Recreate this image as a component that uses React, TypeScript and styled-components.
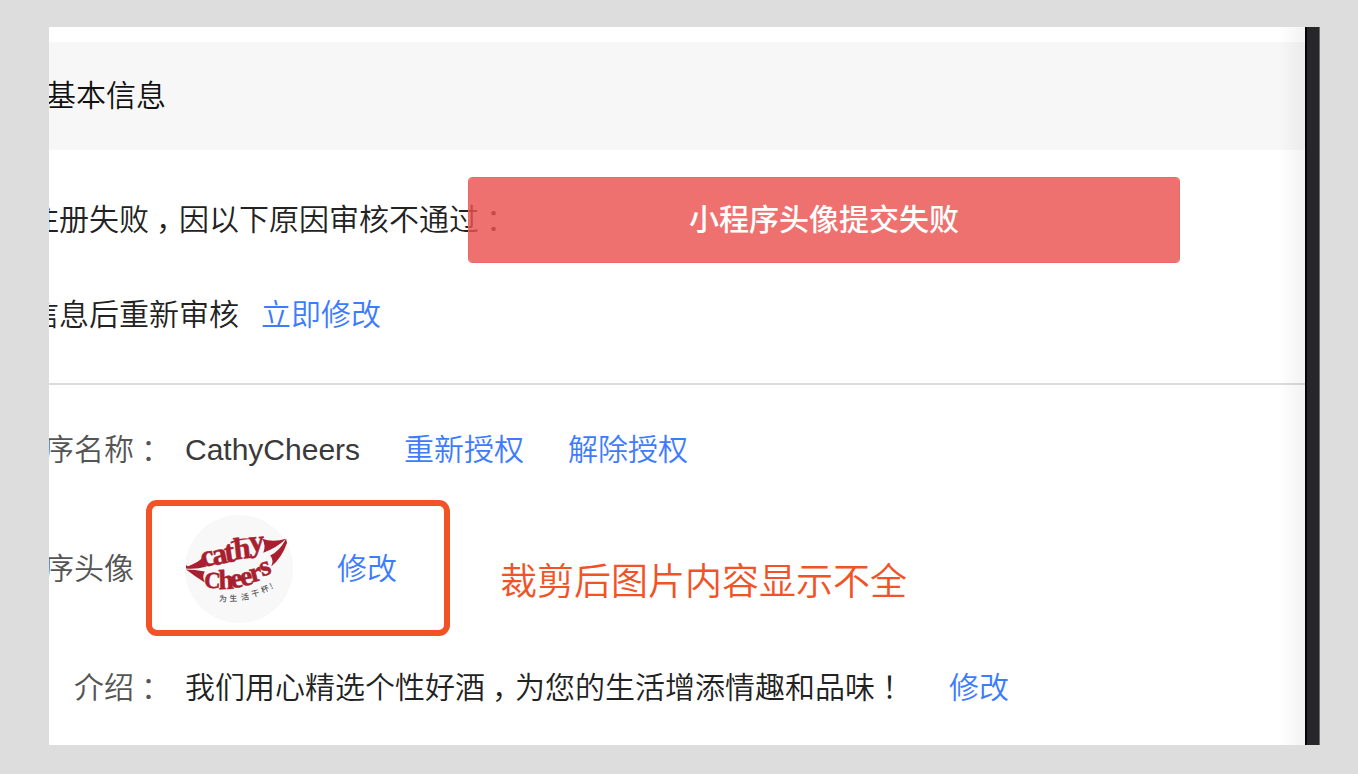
import React from "react";
import styled, { createGlobalStyle } from "styled-components";

const GlobalStyle = createGlobalStyle`
  body {
    margin: 0;
    background: #dddddd;
    color: #222222;
    font: 350 30px/40px "Liberation Sans", "Noto Sans CJK SC", sans-serif;
  }
  *, *::before, *::after { box-sizing: border-box; }
`;

const Page = styled.main`
  display: flex;
  padding: 27px 38px 28px 49px;
`;

const Panel = styled.section`
  position: relative;
  flex: 1;
  min-width: 0;
  overflow: hidden;
  padding-top: 15px;
  background: #ffffff;
  white-space: nowrap;

  &::after {
    content: "";
    position: absolute;
    inset: 0 0 0 auto;
    width: 26px;
    background: linear-gradient(to right, rgba(0, 0, 0, 0), rgba(0, 0, 0, 0.05));
    pointer-events: none;
  }
`;

const WindowEdge = styled.div`
  width: 15px;
  background: #272729;
  border-left: 2px solid #050505;
  border-right: 1px solid #6b6b6b;
`;

const SectionHeader = styled.header`
  padding: 34px 0;
  background: #f7f7f7;
`;

const Title = styled.h1`
  margin: 0 0 0 -3px;
  font: inherit;
  color: #111111;
`;

const Notice = styled.div`
  display: flex;
  flex-direction: column;
  gap: 55px;
  padding: 50px 0 48px;
  border-bottom: 2px solid #dcdcdc;
`;

const NoticeLine = styled.p`
  display: flex;
  gap: 22px;
  margin: 0 0 0 -20px;
`;

const Link = styled.a`
  color: #3d7bff;
  text-decoration: none;
`;

const Mark = styled.span`
  padding-left: 7px;
  margin-right: -7px;
`;

const Toast = styled.div`
  position: absolute;
  top: 150px;
  left: 419px;
  right: 125px;
  padding: 22px 0;
  border: 1px solid #ec6a66;
  border-radius: 4px;
  background: rgba(234, 82, 79, 0.82);
  background-clip: padding-box;
  color: #ffffff;
  font-weight: 500;
  text-align: center;
`;

const Details = styled.dl`
  display: flex;
  flex-direction: column;
  gap: 45px;
  margin: 0;
  padding: 45px 0 37px;
`;

const Row = styled.div`
  position: relative;
  display: flex;
  align-items: center;
`;

const Label = styled.dt`
  display: flex;
  justify-content: flex-end;
  width: 115px;
  color: #555555;
`;

const Value = styled.dd`
  display: flex;
  align-items: center;
  gap: 44px;
  margin: 0 0 0 21px;
`;

const AccountName = styled.span`
  color: #3a3a3a;
`;

const Avatar = styled.svg`
  display: block;
  width: 108px;
  height: 108px;
`;

const Highlight = styled.div`
  position: absolute;
  top: -15px;
  left: 97px;
  width: 304px;
  height: 136px;
  border: 6px solid #f15326;
  border-radius: 11px;
`;

const Annotation = styled.p`
  position: absolute;
  top: 48px;
  left: 451px;
  margin: 0;
  color: #f15326;
  font-size: 37px;
`;

function Logo() {
  return (
    <Avatar viewBox="0 0 109 109" role="img" aria-label="Cathy Cheers">
      <circle cx="54.5" cy="54.5" r="54.5" fill="#f8f8f8" />
      <g fill="#a91f30">
        <path d="M1 50Q2 53 5 51Q13 48 18 43Q17 49 22 52Q11 55 1 54Z" />
        <path d="M1 55Q10 55 20 57Q17 62 20 68Q10 62 1 55Z" />
        <path d="M78 24Q89 28 102 24Q93 33 79 38Q82 31 78 24Z" />
        <path d="M102 24L103 28Q98 43 87 52Q90 46 86 41Q95 37 102 24Z" />
        <path d="M46 27Q58 21 70 25Q60 23 46 29Z" />
      </g>
      <g
        fill="#a91f30"
        stroke="#a91f30"
        strokeWidth="0.6"
        fontFamily="Liberation Serif, serif"
        fontWeight="700"
      >
        <text fontSize="31" x="18 29 41 50 65" y="53 51 48 45 37" rotate="-14 -12 -8 -6 -4">cathy</text>
        <text fontSize="23" x="19" y="73" rotate="4">C</text>
        <text fontSize="28" x="34 47 57 67 78" y="75 74 72 68 62" rotate="-2 -8 -10 -14 -18">heers</text>
      </g>
      <text
        fill="#555555"
        fontFamily="Noto Sans CJK SC"
        fontSize="8"
        fontWeight="500"
        x="34 45 57 68 78 87"
        y="87 87 86 83 79 75"
        rotate="4 -2 -8 -16 -22 -26"
      >
        为生活干杯!
      </text>
    </Avatar>
  );
}

export default function App() {
  return (
    <>
      <GlobalStyle />
      <Page>
        <Panel>
          <SectionHeader>
            <Title>基本信息</Title>
          </SectionHeader>
          <Notice>
            <NoticeLine>
              <span>
                注册失败<Mark>，</Mark>因以下原因审核不通过<Mark>：</Mark>
              </span>
            </NoticeLine>
            <NoticeLine>
              <span>信息后重新审核</span>
              <Link href="#edit">立即修改</Link>
            </NoticeLine>
          </Notice>
          <Details>
            <Row>
              <Label>序名称<Mark>：</Mark></Label>
              <Value>
                <AccountName>CathyCheers</AccountName>
                <Link href="#reauthorize">重新授权</Link>
                <Link href="#revoke">解除授权</Link>
              </Value>
            </Row>
            <Row>
              <Label>序头像<Mark>：</Mark></Label>
              <Value>
                <Logo />
                <Link href="#avatar">修改</Link>
              </Value>
              <Highlight />
              <Annotation>裁剪后图片内容显示不全</Annotation>
            </Row>
            <Row>
              <Label>介绍<Mark>：</Mark></Label>
              <Value>
                <span>
                  我们用心精选个性好酒<Mark>，</Mark>为您的生活增添情趣和品味<Mark>！</Mark>
                </span>
                <Link href="#intro">修改</Link>
              </Value>
            </Row>
          </Details>
          <Toast role="alert">小程序头像提交失败</Toast>
        </Panel>
        <WindowEdge />
      </Page>
    </>
  );
}
